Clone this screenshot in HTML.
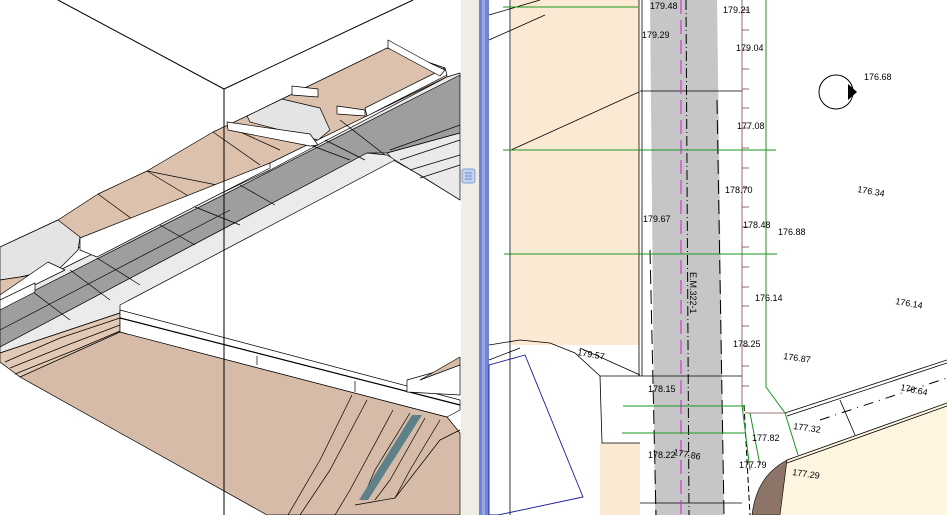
<!DOCTYPE html>
<html><head><meta charset="utf-8"><style>
html,body{margin:0;padding:0;background:#fff;overflow:hidden}
svg{display:block}
text{font-family:"Liberation Sans",sans-serif;font-size:9px;fill:#000}
</style></head><body>
<svg width="947" height="515" viewBox="0 0 947 515" xmlns="http://www.w3.org/2000/svg">
<rect width="947" height="515" fill="#fff"/>
<!-- LEFT PANEL -->
<g stroke="#000" stroke-width="0.7" stroke-linejoin="round">
<!-- upper tan terrain -->
<polygon points="0,247 58,220 98,194 147,171 213,132 247,116 282,99 387,48 445,68 447,77 270,163 80,247 60,262 0,285" fill="#dcc1ad"/>
<polygon points="0,247 58,220 80,237 78,250 60,268 20,277 0,280" fill="#e4e4e4"/>
<polygon points="247,116 282,99 320,108 330,130 318,140 250,122" fill="#e4e4e4"/>
<polygon points="0,280 20,277 60,270 58,290 0,300" fill="#dcc1ad"/>
<!-- light strip above gray -->
<polygon points="0,300 80,260 270,170 447,77 460,73 460,77 0,310" fill="#ebebeb"/>
<!-- gray road -->
<polygon points="0,308 460,75 460,133 387,153 367,153 0,347" fill="#9e9e9e"/>
<polygon points="387,153 460,133 460,200 420,175 393,160" fill="#eaeaea"/>
<!-- light strip below gray -->
<polygon points="0,347 367,153 387,155 395,160 120,305 120,313 0,353" fill="#ebebeb"/>
<!-- road transverse lines -->
<line x1="33" y1="292" x2="70" y2="320"/><line x1="70" y1="270" x2="110" y2="300"/>
<line x1="97" y1="258" x2="140" y2="285"/><line x1="160" y1="225" x2="195" y2="245"/>
<line x1="195" y1="207" x2="240" y2="225"/><line x1="240" y1="185" x2="275" y2="205"/>
<line x1="310" y1="145" x2="350" y2="160"/><line x1="325" y1="140" x2="365" y2="160"/>
<line x1="340" y1="120" x2="385" y2="155"/><line x1="390" y1="150" x2="460" y2="125"/>
<line x1="400" y1="160" x2="460" y2="140"/><line x1="410" y1="170" x2="460" y2="155"/>
<line x1="420" y1="178" x2="460" y2="165"/><line x1="395" y1="160" x2="460" y2="200"/>
<line x1="0" y1="330" x2="230" y2="210"/>
<!-- lines on upper tan -->
<line x1="98" y1="194" x2="147" y2="230"/><line x1="147" y1="171" x2="222" y2="186"/>
<line x1="147" y1="171" x2="195" y2="200"/><line x1="213" y1="132" x2="260" y2="165"/>
<line x1="227" y1="126" x2="280" y2="150"/>
<!-- upper white walls -->
<polygon points="80,238 270,163 270,168 97,257 80,250" fill="#fff"/>
<polygon points="227,122 310,134 318,145 310,146 228,130" fill="#fff"/>
<polygon points="292,86 318,89 318,97 292,95" fill="#fff"/>
<polygon points="337,106 365,110 365,116 337,114" fill="#fff"/>
<polygon points="365,108 445,68 447,75 367,116" fill="#fff"/>
<polygon points="388,40 430,63 445,70 440,76 388,48" fill="#fff"/>
<polygon points="48,262 65,270 0,302 0,295" fill="#fff"/>
<polygon points="0,300 35,283 35,292 0,310" fill="#fff"/>
<!-- lower tan -->
<polygon points="0,353 120,313 120,332 447,417 460,433 460,515 267,515 20,377 0,360" fill="#d5bba8"/>
<polygon points="0,353 120,313 120,332 20,377 0,362" fill="#e2c9b5"/>
<polyline points="5,362 60,338 120,318" fill="none"/>
<polyline points="10,368 70,344 120,325" fill="none"/>
<polyline points="15,374 80,348 120,331" fill="none"/>
<polygon points="120,310 460,400 460,410 447,417 120,332" fill="#fff"/>
<line x1="120" y1="318" x2="460" y2="405" stroke-width="1.2"/>
<line x1="257" y1="356" x2="257" y2="365"/><line x1="355" y1="381" x2="355" y2="392"/>
<polygon points="407,380 460,365 460,395 407,392" fill="#fff"/>
<polygon points="420,380 460,357 460,365" fill="#d8bca8"/>
<polyline points="352,395 320,460 288,515" fill="none"/>
<polyline points="367,400 330,470 300,515" fill="none"/>
<polyline points="393,410 350,490 335,515" fill="none"/>
<polyline points="410,413 375,470 362,500" fill="none"/>
<polyline points="425,418 390,480 375,500" fill="none"/>
<polyline points="440,420 410,470 395,498" fill="none"/>
<polyline points="355,505 395,498 440,440 460,430" fill="none"/>
<polygon points="412,415 422,415 368,500 359,500" fill="#5e8088" stroke="none"/>
</g>
<g stroke="#000" stroke-width="1" fill="none">
<line x1="58" y1="0" x2="224" y2="89"/>
<line x1="224" y1="89" x2="413" y2="0"/>
<line x1="224" y1="89" x2="224" y2="515"/>
</g>
<!-- SPLITTER -->
<rect x="461" y="0" width="18" height="515" fill="#efede4"/>
<rect x="479" y="0" width="10" height="515" fill="#7383d6"/>
<rect x="482" y="0" width="3" height="515" fill="#9aa6e6"/>
<rect x="462" y="169" width="13" height="14" rx="2" fill="#c5d3f2" stroke="#8aa0d8"/>
<g stroke="#6b7fc8"><line x1="465" y1="173" x2="472" y2="173"/><line x1="465" y1="176" x2="472" y2="176"/><line x1="465" y1="179" x2="472" y2="179"/></g>
<!-- RIGHT PANEL -->
<rect x="489" y="0" width="458" height="515" fill="#fff"/>
<rect x="511" y="0" width="128" height="345" fill="#fbe9d4"/>
<rect x="600" y="443" width="40" height="72" fill="#fbe9d4"/>
<polygon points="650,0 717,0 724,515 655,515" fill="#c6c6c8"/>
<polygon points="787,460 947,403 947,515 780,515" fill="#fdf5e0"/>
<path d="M752,515 C755,490 765,472 787,460 L780,515 Z" fill="#8d7468" stroke="#000" stroke-width="0.6"/>
<g stroke="#000" stroke-width="0.8" fill="none">
<line x1="510" y1="0" x2="510" y2="515"/>
<line x1="639" y1="0" x2="639" y2="376"/>
<line x1="642" y1="0" x2="642" y2="376"/>
<line x1="511" y1="150" x2="639" y2="92"/>
<line x1="640" y1="91" x2="742" y2="91"/>
<line x1="640" y1="376" x2="742" y2="376"/>
<line x1="742" y1="0" x2="742" y2="405" stroke="#7a4a4a"/>
<polyline points="489,345 520,340 550,343 575,353 600,376 640,376"/>
<polyline points="600,376 602,443 640,443"/>
<line x1="489" y1="360" x2="520" y2="348"/>
<line x1="489" y1="15" x2="540" y2="0"/><line x1="489" y1="40" x2="545" y2="15"/>
<line x1="580" y1="348" x2="640" y2="375"/>
<polyline points="785,413 947,360"/><polyline points="787,416 947,363"/>
<polyline points="787,460 947,403"/><polyline points="787,463 947,406"/>
<line x1="840" y1="400" x2="855" y2="435"/>
<line x1="745" y1="413" x2="787" y2="413" stroke="#7a4a4a"/>
<line x1="640" y1="503" x2="742" y2="503"/>
</g>
<polygon points="525,355 583,497 498,515 489,515 489,365" fill="none" stroke="#1a1aa0" stroke-width="0.9"/>
<!-- ticks -->
<g stroke="#7a4a4a" stroke-width="0.8">
<line x1="742" y1="10" x2="749" y2="10"/><line x1="742" y1="30" x2="749" y2="30"/><line x1="742" y1="50" x2="749" y2="50"/><line x1="742" y1="69" x2="749" y2="69"/><line x1="742" y1="89" x2="749" y2="89"/><line x1="742" y1="108" x2="749" y2="108"/><line x1="742" y1="128" x2="749" y2="128"/><line x1="742" y1="148" x2="749" y2="148"/><line x1="742" y1="168" x2="749" y2="168"/><line x1="742" y1="188" x2="749" y2="188"/><line x1="742" y1="207" x2="749" y2="207"/><line x1="742" y1="227" x2="749" y2="227"/><line x1="742" y1="247" x2="749" y2="247"/><line x1="742" y1="267" x2="749" y2="267"/><line x1="742" y1="287" x2="749" y2="287"/><line x1="742" y1="306" x2="749" y2="306"/><line x1="742" y1="326" x2="749" y2="326"/><line x1="742" y1="346" x2="749" y2="346"/><line x1="742" y1="366" x2="749" y2="366"/><line x1="742" y1="386" x2="749" y2="386"/>
</g>
<!-- dashed road edges -->
<g stroke="#000" stroke-width="1" fill="none" stroke-dasharray="14,6">
<line x1="717" y1="100" x2="724" y2="515"/>
<line x1="650" y1="250" x2="656" y2="515"/>
<line x1="686" y1="0" x2="689" y2="515" stroke-dasharray="10,3,1,3"/>
<line x1="744" y1="405" x2="750" y2="515" stroke-dasharray="6,3"/>
<line x1="820" y1="420" x2="947" y2="378" stroke-dasharray="10,6,1,6"/>
</g>
<line x1="681" y1="0" x2="681" y2="515" stroke="#d020d0" stroke-width="1" stroke-dasharray="14,6"/>
<!-- green lines -->
<g stroke="#1a961a" stroke-width="1" fill="none">
<line x1="503" y1="7" x2="638" y2="7"/>
<line x1="503" y1="150" x2="776" y2="150"/>
<line x1="504" y1="254" x2="777" y2="254"/>
<line x1="623" y1="406" x2="745" y2="406"/>
<line x1="622" y1="433" x2="745" y2="433"/>
<polyline points="766,0 766,387 785,413 798,455"/>
<line x1="742" y1="405" x2="750" y2="470"/>
<line x1="750" y1="413" x2="760" y2="465"/>
</g>
<!-- manhole -->
<circle cx="836" cy="92" r="17" fill="none" stroke="#000"/>
<polygon points="848,84 857,92 848,100" fill="#000"/>
<!-- labels -->
<g>
<text x="650" y="9">179.48</text><text x="642" y="38">179.29</text>
<text x="723" y="13">179.21</text><text x="736" y="51">179.04</text>
<text x="737" y="129">177.08</text><text x="725" y="193">178.70</text>
<text x="643" y="222">179.67</text><text x="743" y="228">178.48</text>
<text x="778" y="235">176.88</text><text x="864" y="80">176.68</text>
<text x="857" y="192" transform="rotate(10 857 192)">176.34</text>
<text x="755" y="301">176.14</text><text x="895" y="304" transform="rotate(10 895 304)">176.14</text>
<text x="733" y="347">178.25</text><text x="783" y="359" transform="rotate(8 783 359)">176.87</text>
<text x="577" y="355" transform="rotate(10 577 355)">179.57</text>
<text x="648" y="392">178.15</text><text x="900" y="390" transform="rotate(12 900 390)">176.64</text>
<text x="793" y="429" transform="rotate(8 793 429)">177.32</text><text x="752" y="441">177.82</text>
<text x="648" y="458">178.22</text><text x="673" y="455" transform="rotate(10 673 455)">177.86</text>
<text x="739" y="468">177.79</text><text x="792" y="475" transform="rotate(8 792 475)">177.29</text>
<text x="690" y="272" transform="rotate(90 690 272)">E.M.322-1</text>
</g>
</svg>
</body></html>
